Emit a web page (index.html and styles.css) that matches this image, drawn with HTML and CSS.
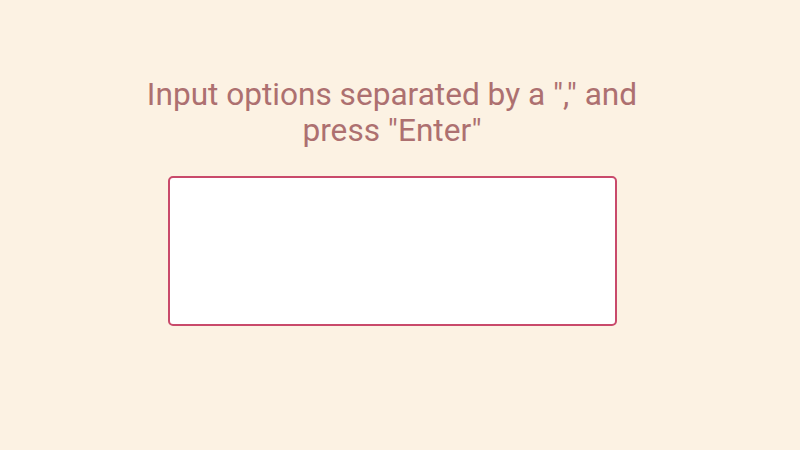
FILE: index.html
```html
<!DOCTYPE html>
<html>
<head>
<meta charset="utf-8">
<link rel="stylesheet" href="styles.css">
</head>
<body>
<main class="page">
  <h1 class="prompt">Input options separated by a "," and press "Enter"</h1>
  <textarea class="options"></textarea>
</main>
</body>
</html>
```
FILE: styles.css
```css
html, body {
  margin: 0;
  padding: 0;
  background: #fcf2e3;
  height: 100%;
}
.page {
  display: flex;
  flex-direction: column;
  align-items: center;
  padding-top: 77px;
  padding-right: 16px;
}
.prompt {
  margin: 0;
  width: 500px;
  text-align: center;
  font-family: Roboto, "Liberation Sans", sans-serif;
  font-weight: 400;
  font-size: 31.6px;
  line-height: 36px;
  color: #ad7070;
}
.options {
  margin-top: 27px;
  box-sizing: border-box;
  width: 449px;
  height: 150px;
  border: 2px solid #c94a6b;
  border-radius: 5px;
  background: #fff;
  resize: none;
  outline: none;
  padding: 8px;
}
```
